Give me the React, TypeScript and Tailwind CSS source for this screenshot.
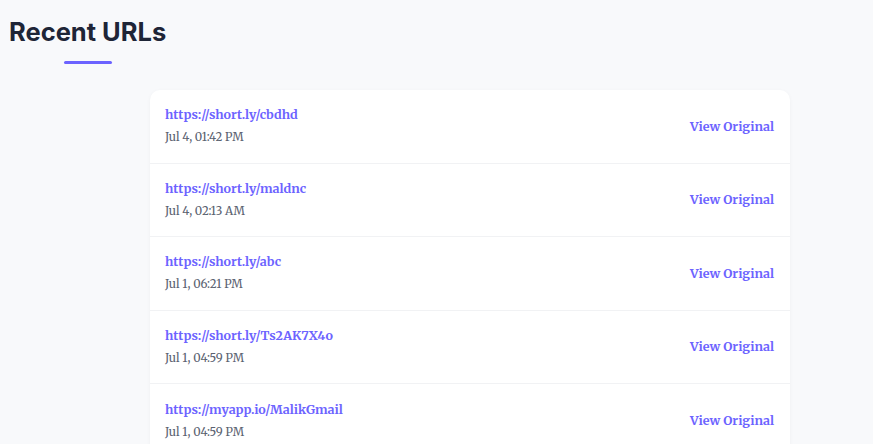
const items = [
  { url: "https://short.ly/cbdhd", date: "Jul 4, 01:42 PM" },
  { url: "https://short.ly/maldnc", date: "Jul 4, 02:13 AM" },
  { url: "https://short.ly/abc", date: "Jul 1, 06:21 PM" },
  { url: "https://short.ly/Ts2AK7X4o", date: "Jul 1, 04:59 PM" },
  { url: "https://myapp.io/MalikGmail", date: "Jul 1, 04:59 PM" },
];

const serif = "font-['Merriweather','DejaVu_Serif',serif]";

export default function App() {
  return (
    <div className="min-h-[444px] bg-[#f8f9fb] pt-[16px] overflow-hidden">
      <div className="inline-flex flex-col items-center pl-[9px]">
        <h2 className="font-['Inter',sans-serif] text-[25.5px] font-bold leading-[32px] text-[#1e2537]">
          Recent URLs
        </h2>
        <div className="mt-[13px] h-[3px] w-[48px] rounded-full bg-[#6c63ff]" />
      </div>
      <div className="mt-[26px] pl-[150px]">
        <div className="w-[640px] rounded-[10px] bg-white shadow-[0_1px_4px_rgba(0,0,0,0.04)]">
          {items.map((it, i) => (
            <div
              key={i}
              className={`flex h-[73.5px] items-center justify-between px-[15px] pr-[16px] ${
                i < items.length - 1 ? "border-b border-[#f1f2f4]" : ""
              }`}
            >
              <div className="flex flex-col gap-[5px]">
                <a className={`${serif} text-[12.5px] font-bold leading-[18px] text-[#6c63ff]`}>
                  {it.url}
                </a>
                <span className={`${serif} text-[11.5px] leading-[17px] text-[#5a6270]`}>
                  {it.date}
                </span>
              </div>
              <a className={`${serif} mt-[2px] text-[12.5px] font-bold text-[#6c63ff]`}>View Original</a>
            </div>
          ))}
        </div>
      </div>
    </div>
  );
}
